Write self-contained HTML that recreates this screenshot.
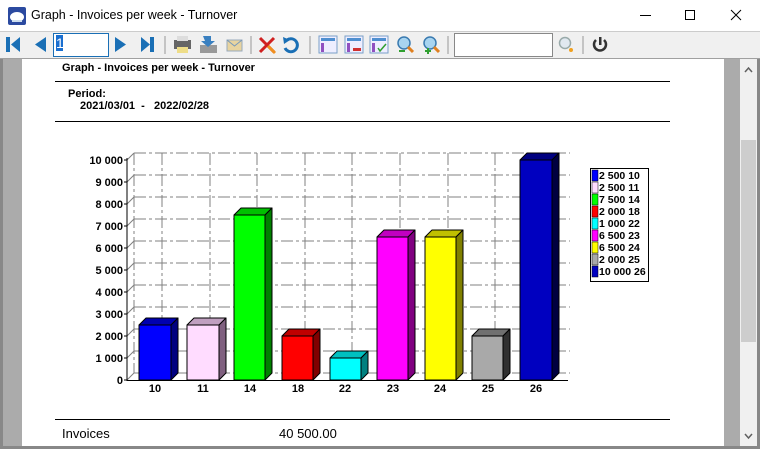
<!DOCTYPE html>
<html><head><style>
*{margin:0;padding:0;box-sizing:border-box}
body{width:760px;height:449px;overflow:hidden;background:#fff;font-family:"Liberation Sans",Arial,sans-serif;position:relative}
.a{position:absolute}
.b{font-weight:bold;font-size:11px;color:#000}
</style></head><body>
<div class="a" style="left:0;top:0;width:760px;height:32px;background:#fff"></div>
<svg class="a" style="left:8px;top:7px" width="18" height="18"><rect x="0" y="0" width="18" height="18" rx="2" fill="#2b4aa0"/><ellipse cx="9" cy="10" rx="7" ry="5" fill="#fff"/><rect x="4" y="13" width="10" height="2" fill="#cde"/></svg>
<div class="a" style="left:31px;top:8px;font-size:12.5px;color:#000">Graph - Invoices per week - Turnover</div>
<div class="a" style="left:640px;top:15px;width:11px;height:1px;background:#000"></div>
<div class="a" style="left:685px;top:10px;width:10px;height:10px;border:1px solid #000"></div>
<svg class="a" style="left:730px;top:9px" width="12" height="12"><path d="M1 1L11 11M11 1L1 11" stroke="#000" stroke-width="1"/></svg>
<div class="a" style="left:0;top:31px;width:760px;height:28px;background:#f0f0f0;border-top:1px solid #ccc;border-bottom:1px solid #a0a0a0"></div>
<svg class="a" style="left:0;top:32px" width="760" height="26">
<g fill="#1a6fb5">
<rect x="6" y="5" width="4" height="15"/><path d="M20 5V20L11 12.5Z"/>
<path d="M46 5V20L35 12.5Z"/>
<path d="M115 5V20L126 12.5Z"/>
<path d="M141 5V20L150 12.5Z"/><rect x="150" y="5" width="4" height="15"/>
</g>
<line x1="165" y1="4" x2="165" y2="22" stroke="#999"/>
<rect x="174" y="8" width="17" height="9" fill="#666"/><rect x="177" y="4" width="11" height="5" fill="#ddd"/><rect x="177" y="15" width="11" height="6" fill="#eedd88"/>
<rect x="200" y="13" width="17" height="8" fill="#999"/><path d="M203 4L211 4L211 9L215 9L208 15L201 9L205 9Z" fill="#3a80c0"/>
<rect x="227" y="8" width="15" height="11" fill="#e8d4a0" stroke="#9ab"/><path d="M227 8L234.5 14L242 8" stroke="#79b" fill="none"/>
<line x1="251" y1="4" x2="251" y2="22" stroke="#999"/>
<path d="M260 6L274 20M274 6L260 20" stroke="#d02020" stroke-width="3"/><path d="M268 14L275 21" stroke="#f09020" stroke-width="3"/>
<path d="M287 8A6.5 6.5 0 1 1 285 16" stroke="#1a6fb5" stroke-width="3" fill="none"/><path d="M283 5L290 8L284 12Z" fill="#1a6fb5"/>
<line x1="310" y1="4" x2="310" y2="22" stroke="#999"/>
<g><rect x="319" y="4" width="18" height="17" fill="#eef" stroke="#7a9fc7"/><rect x="321" y="6" width="14" height="3" fill="#4f8fd0"/><rect x="321" y="11" width="3" height="9" fill="#9050c0"/></g>
<g><rect x="345" y="4" width="18" height="17" fill="#eef" stroke="#7a9fc7"/><rect x="347" y="6" width="14" height="3" fill="#4f8fd0"/><rect x="347" y="11" width="3" height="9" fill="#9050c0"/><rect x="353" y="16" width="8" height="3" fill="#d03030"/></g>
<g><rect x="370" y="4" width="18" height="17" fill="#eef" stroke="#7a9fc7"/><rect x="372" y="6" width="14" height="3" fill="#4f8fd0"/><rect x="372" y="11" width="3" height="9" fill="#9050c0"/><path d="M378 16L380 19L386 12" stroke="#30a030" stroke-width="1.5" fill="none"/></g>
<circle cx="404" cy="11" r="6" fill="#a8d4f0" stroke="#3a7ab0" stroke-width="1.5"/><path d="M408 15L413 20" stroke="#e08020" stroke-width="3"/><rect x="399" y="18" width="6" height="2" fill="#30a030"/>
<circle cx="430" cy="11" r="6" fill="#a8d4f0" stroke="#3a7ab0" stroke-width="1.5"/><path d="M434 15L439 20" stroke="#e08020" stroke-width="3"/><path d="M428 16v6M425 19h6" stroke="#30a030" stroke-width="2"/>
<line x1="448" y1="4" x2="448" y2="22" stroke="#999"/>
<circle cx="565" cy="11" r="5.5" fill="#e0e8f0" stroke="#9aa" stroke-width="1.5"/><circle cx="571" cy="18" r="2" fill="#f0a020"/>
<line x1="583" y1="4" x2="583" y2="22" stroke="#999"/>
<path d="M596 8A6 6 0 1 0 604 8" stroke="#333" stroke-width="2.5" fill="none"/><rect x="599" y="5" width="2.5" height="8" fill="#333"/>
</svg>
<div class="a" style="left:53px;top:33px;width:56px;height:24px;background:#fff;border:1px solid #1a6fb5"></div>
<div class="a" style="left:56px;top:35px;font-size:14px;background:#1a6fd0;color:#fff;line-height:16px;width:7px">1</div>
<div class="a" style="left:454px;top:33px;width:99px;height:24px;background:#fff;border:1px solid #888"></div>
<div class="a" style="left:0;top:59px;width:760px;height:388px;background:#ababab;border-left:3px solid #f0f0f0"></div>
<div class="a" style="left:0;top:59px;width:3px;height:390px;background:#888"></div>
<div class="a" style="left:22px;top:59px;width:702px;height:388px;background:#fff"></div>
<div class="a" style="left:740px;top:59px;width:17px;height:388px;background:#f0f0f0"></div>
<div class="a" style="left:741px;top:140px;width:15px;height:202px;background:#cdcdcd"></div>
<svg class="a" style="left:740px;top:59px" width="17" height="388"><path d="M5 13L8.5 9L12 13" stroke="#606060" stroke-width="1.5" fill="none"/><path d="M5 375L8.5 379L12 375" stroke="#606060" stroke-width="1.5" fill="none"/></svg>
<div class="a" style="left:757px;top:59px;width:3px;height:390px;background:#888"></div>
<div class="a" style="left:0;top:446px;width:760px;height:3px;background:#888"></div>

<div class="a b" style="left:62px;top:62px">Graph - Invoices per week - Turnover</div>
<div class="a" style="left:55px;top:81px;width:615px;height:1px;background:#000"></div>
<div class="a b" style="left:68px;top:88px">Period:</div>
<div class="a b" style="left:80px;top:100px">2021/03/01 &nbsp;- &nbsp; 2022/02/28</div>
<div class="a" style="left:55px;top:121px;width:615px;height:1px;background:#000"></div>
<div class="a" style="left:55px;top:419px;width:615px;height:1px;background:#000"></div>
<div class="a" style="left:62px;top:426px;font-size:13px">Invoices</div>
<div class="a" style="left:279px;top:426px;font-size:13px">40 500.00</div>

<svg class="a" style="left:0;top:0" width="724" height="449" font-family="Liberation Sans,Arial,sans-serif" font-weight="bold" font-size="11">
<g stroke="#808080" stroke-width="1" stroke-dasharray="12,3,3,3" fill="none">
<path d="M134 153H570M134 175H570M134 197H570M134 219H570M134 241H570M134 263H570M134 285H570M134 307H570M134 329H570M134 351H570M134 373H570"/>
<path d="M134 153V373M162 153V373M210 153V373M257 153V373M305 153V373M352 153V373M400 153V373M448 153V373M495 153V373M543 153V373"/>
<path d="M127 160L134 153M127 182L134 175M127 204L134 197M127 226L134 219M127 248L134 241M127 270L134 263M127 292L134 285M127 314L134 307M127 336L134 329M127 358L134 351M127 380L134 373"/>
</g>
<line x1="127" y1="158" x2="127" y2="381" stroke="#000"/>
<line x1="127" y1="380.5" x2="568" y2="380.5" stroke="#000"/>
<g stroke="#000" stroke-width="1">
<path d="M124 160h3M124 182h3M124 204h3M124 226h3M124 248h3M124 270h3M124 292h3M124 314h3M124 336h3M124 358h3M124 380h3"/>
</g>
<g text-anchor="end">
<text x="123" y="164">10 000</text><text x="123" y="186">9 000</text><text x="123" y="208">8 000</text><text x="123" y="230">7 000</text><text x="123" y="252">6 000</text><text x="123" y="274">5 000</text><text x="123" y="296">4 000</text><text x="123" y="318">3 000</text><text x="123" y="340">2 000</text><text x="123" y="362">1 000</text><text x="123" y="384">0</text>
</g>
<g stroke="#000" stroke-width="1" stroke-linejoin="round">
<rect x="139" y="325" width="32" height="55" fill="#0000ff"/><path d="M139 325L146 318H178L171 325Z" fill="#0000b0"/><path d="M171 325L178 318V373L171 380Z" fill="#000080"/>
<rect x="187" y="325" width="32" height="55" fill="#ffdcff"/><path d="M187 325L194 318H226L219 325Z" fill="#c0a0c0"/><path d="M219 325L226 318V373L219 380Z" fill="#806080"/>
<rect x="234" y="215" width="31" height="165" fill="#00ff00"/><path d="M234 215L241 208H272L265 215Z" fill="#00c000"/><path d="M265 215L272 208V373L265 380Z" fill="#008000"/>
<rect x="282" y="336" width="31" height="44" fill="#ff0000"/><path d="M282 336L289 329H320L313 336Z" fill="#c00000"/><path d="M313 336L320 329V373L313 380Z" fill="#800000"/>
<rect x="330" y="358" width="31" height="22" fill="#00ffff"/><path d="M330 358L337 351H368L361 358Z" fill="#00c0c0"/><path d="M361 358L368 351V373L361 380Z" fill="#008080"/>
<rect x="377" y="237" width="31" height="143" fill="#ff00ff"/><path d="M377 237L384 230H415L408 237Z" fill="#c000c0"/><path d="M408 237L415 230V373L408 380Z" fill="#800080"/>
<rect x="425" y="237" width="31" height="143" fill="#ffff00"/><path d="M425 237L432 230H463L456 237Z" fill="#c0c000"/><path d="M456 237L463 230V373L456 380Z" fill="#808000"/>
<rect x="472" y="336" width="31" height="44" fill="#a9a9a9"/><path d="M472 336L479 329H510L503 336Z" fill="#707070"/><path d="M503 336L510 329V373L503 380Z" fill="#303030"/>
<rect x="520" y="160" width="32" height="220" fill="#0000c0"/><path d="M520 160L527 153H559L552 160Z" fill="#000080"/><path d="M552 160L559 153V373L552 380Z" fill="#000040"/>
</g>
<g text-anchor="middle">
<text x="155" y="392">10</text><text x="203" y="392">11</text><text x="250" y="392">14</text><text x="298" y="392">18</text><text x="345" y="392">22</text><text x="393" y="392">23</text><text x="440" y="392">24</text><text x="488" y="392">25</text><text x="536" y="392">26</text>
</g>
<rect x="590.5" y="168.5" width="58" height="113" fill="#fff" stroke="#000"/>
<g stroke="#000" stroke-width="0.5">
<rect x="592" y="170" width="6" height="11" fill="#0000ff"/>
<rect x="592" y="182" width="6" height="11" fill="#ffdcff"/>
<rect x="592" y="194" width="6" height="11" fill="#00ff00"/>
<rect x="592" y="206" width="6" height="11" fill="#ff0000"/>
<rect x="592" y="218" width="6" height="11" fill="#00ffff"/>
<rect x="592" y="230" width="6" height="11" fill="#ff00ff"/>
<rect x="592" y="242" width="6" height="11" fill="#ffff00"/>
<rect x="592" y="254" width="6" height="11" fill="#a9a9a9"/>
<rect x="592" y="266" width="6" height="11" fill="#0000c0"/>
</g>
<g font-size="10.5">
<text x="599" y="179">2 500 10</text><text x="599" y="191">2 500 11</text><text x="599" y="203">7 500 14</text><text x="599" y="215">2 000 18</text><text x="599" y="227">1 000 22</text><text x="599" y="239">6 500 23</text><text x="599" y="251">6 500 24</text><text x="599" y="263">2 000 25</text><text x="599" y="275">10 000 26</text>
</g>
</svg>
</body></html>
